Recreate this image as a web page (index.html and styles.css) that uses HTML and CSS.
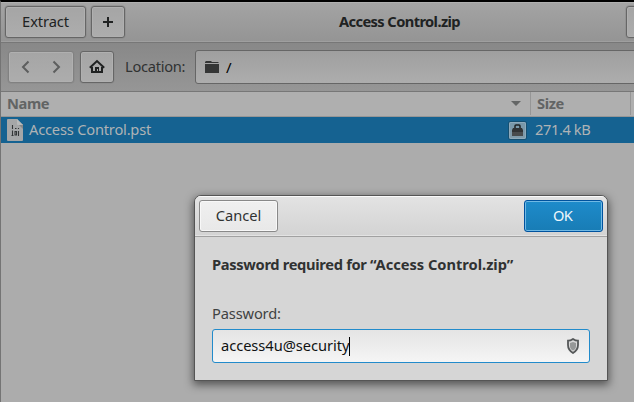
FILE: index.html
```html
<!DOCTYPE html>
<html lang="en">
<head>
<meta charset="utf-8">
<title>Access Control.zip</title>
<link rel="stylesheet" href="styles.css">
</head>
<body>
<main class="window">
  <header class="headerbar">
    <button class="btn extract"><span class="t-extract">Extract</span></button>
    <button class="btn square"><svg width="16" height="16" viewBox="0 0 16 16"><path d="M8 3v10M3 8h10" stroke="#202222" stroke-width="2"/></svg></button>
    <h1 class="title">Access Control.zip</h1>
    <button class="btn edge" aria-label="Menu"></button>
  </header>
  <nav class="toolbar">
    <div class="btn pair">
      <svg width="16" height="16" viewBox="0 0 16 16"><path d="M10.500 2.500L5 8l5.500 5.500" fill="none" stroke="#5d5e5e" stroke-width="2"/></svg>
      <svg width="16" height="16" viewBox="0 0 16 16"><path d="M4.500 2.500L10 8l-5.500 5.500" fill="none" stroke="#5d5e5e" stroke-width="2"/></svg>
    </div>
    <button class="btn square home"><svg width="16" height="16" viewBox="0 0 16 16"><path d="M.8 8.700L8 2l7.200 6.700" fill="none" stroke="#202222" stroke-width="2"/><path d="M3 8v5h10V8" fill="none" stroke="#202222" stroke-width="2"/><path d="M6 8h4v5H6z" fill="#202222"/><path d="M8 10h1v2H8z" fill="#aaa"/></svg></button>
    <span class="location">Location:</span>
    <div class="path"><svg width="16" height="16" viewBox="0 0 16 16"><path d="M1 4V3l1-1h5l1 1h6l1 1zM1 5h14v9H1z" fill="#353636"/></svg><span class="slash">/</span></div>
  </nav>
  <section class="list">
    <div class="row head">
      <div class="cell name">Name<svg class="arrow" width="10" height="5" viewBox="0 0 10 5"><path d="M0 0h10L5 5z" fill="#646666"/></svg></div>
      <div class="cell size">Size</div>
    </div>
    <div class="row file">
      <div class="cell name">
        <svg class="doc" width="16" height="22" viewBox="0 0 16 22"><path d="M0 1q0-1 1-1h9l6 6v15q0 1-1 1H1q-1 0-1-1z" fill="#a5a7a8"/><path d="M11 5h5v5z" fill="#858889"/><path d="M10 0l6 6h-5q-1 0-1-1z" fill="#b8baba"/><path d="M5.500 6v4M8 9.500h1.500M11.500 9v1M5.500 11.500v5M8 12.500h1.500v3.500H8zM11.500 12v5M4.500 16.500h2" fill="none" stroke="#333637" stroke-width="1.100"/></svg>
        <span class="filename">Access Control.pst</span>
        <span class="lock"><svg width="17" height="17" viewBox="0 0 17 17"><path d="M6 7V4q0-1 1-1h3q1 0 1 1v3" fill="none" stroke="#1c2022" stroke-width="1.500"/><path d="M4 6h9l1 2v5q0 1-1 1H4q-1 0-1-1V8z" fill="#303335"/><path d="M3 10h11v3q0 1-1 1H4q-1 0-1-1z" fill="#484b4d"/></svg></span>
      </div>
      <div class="cell size"><span class="lift">271.4 kB</span></div>
    </div>
  </section>
</main>
<div class="dialog" role="dialog">
  <header class="dialog-bar">
    <button class="dbtn"><span class="t-cancel">Cancel</span></button>
    <button class="dbtn ok"><span class="t-ok">OK</span></button>
  </header>
  <div class="dialog-body">
    <h2 class="question">Password required for <span class="archive">“Access Control.zip”</span></h2>
    <div class="label">Password:</div>
    <div class="entry"><span class="value">access4u@security</span><i class="caret"></i>
      <svg class="shield" width="14" height="16" viewBox="0 0 14 16"><path d="M7 1Q9.500 2.700 12 2.700V7q0 5-5 8-5-3-5-8V2.700Q4.500 2.700 7 1z" fill="#d8d8d8" stroke="#555859" stroke-width="1.800"/><path d="M7 4l3 1v3q0 3-3 4.500Q4 11 4 8V5z" fill="#969898"/></svg>
    </div>
  </div>
</div>
</body>
</html>
```
FILE: styles.css
```css
* { box-sizing: border-box; }
body { margin: 0; width: 634px; height: 402px; overflow: hidden; background: #acacac; color: #202222; font: 14.67px/20px "Noto Sans", sans-serif; }
button { font: inherit; color: inherit; padding: 0; }
svg { display: block; flex: none; }
span, h1, h2 { white-space: nowrap; }
.window { height: 402px; border-top: 2px solid #000; border-left: 1px solid #747474; background: #acacac; overflow: hidden; }
.headerbar { position: relative; display: flex; align-items: flex-start; gap: 5px; height: 41px; padding: 4px 0 0 4px; border-bottom: 1px solid #777; background: linear-gradient(#a4a4a4, #949494); box-shadow: inset 0 1px #b0b0b0, inset 0 -1px #9f9f9f; }
.btn { display: flex; align-items: center; justify-content: center; flex: none; height: 32px; border: 1px solid #666; border-radius: 3px; background: linear-gradient(#a5a5a5, #adadad); box-shadow: inset 0 0 0 1px #b0b0b0, 0 0 0 .5px #888; }
.extract { width: 81px; }
.t-extract, .t-cancel, .t-ok, .filename, .lift, .value { padding-bottom: 2px; }
.t-extract { letter-spacing: -.1px; }
.square { width: 34px; }
.edge { width: 20px; margin-left: auto; margin-right: -12px; }
.title { position: absolute; left: 338px; top: 9px; margin: 0; font-size: 14.67px; font-weight: 700; line-height: 20px; letter-spacing: -.6px; }
.toolbar { display: flex; align-items: flex-start; height: 49px; padding: 8px 0 0 7px; border-bottom: 1px solid #777; background: linear-gradient(#888, #969696); }
.pair { width: 66px; gap: 15px; border-color: #818181; }
.home { margin-left: 6px; }
.location { flex: none; margin: 5px 10px 0 11px; width: 60px; color: #303232; letter-spacing: -.28px; }
.path { display: flex; align-items: center; gap: 6px; width: 450px; flex: none; height: 34px; margin-top: -1px; padding-left: 8px; border: 1px solid #666; border-radius: 3px; background: linear-gradient(#9f9f9f, #adadad); color: #000; }
.slash { font-size: 15px; }
.row { display: flex; }
.cell { display: flex; align-items: center; }
.name { width: 530px; flex: none; position: relative; }
.head { height: 25px; border-bottom: 1px solid #969696; background: #afafaf; color: #626464; font-weight: 700; letter-spacing: -.4px; line-height: 19px; padding-bottom: 1px; }
.head .name { padding-left: 6px; border-right: 1px solid #969696; }
.arrow { margin-left: auto; margin-right: 9px; }
.head .size { width: 100px; padding-left: 6px; border-right: 1px solid #969696; }
.file { height: 26px; background: #156291; color: #afb3b5; letter-spacing: -.2px; }
.file .name { padding-left: 6px; }
.file .size { padding-left: 4px; letter-spacing: -.4px; }
.filename { margin-left: 6px; }
.lock { margin-left: auto; margin-right: 5px; width: 17px; height: 17px; border-radius: 2px; background: linear-gradient(#7797a9, #819baa); box-shadow: inset 0 0 0 1px #8eaabb, 0 0 0 1px #154f70; }
.dialog { position: absolute; left: 194px; top: 195px; width: 414px; height: 186px; border: 1px solid #555; border-radius: 7px 7px 0 0; background: #d6d6d6; box-shadow: 0 3px 9px 1px rgba(0,0,0,.5); overflow: hidden; }
.dialog-bar { display: flex; justify-content: space-between; align-items: flex-start; height: 41px; padding: 4px; border-bottom: 1px solid #a1a1a1; background: linear-gradient(#e3e3e3, #d3d3d3); box-shadow: inset 0 1px #fafafa, inset 0 -1px #e3e3e3; }
.dbtn { display: flex; align-items: center; justify-content: center; width: 79px; height: 32px; border: 1px solid #898989; border-radius: 3px; background: linear-gradient(#f0f0f0, #e8e8e8); box-shadow: inset 0 0 0 1px #f8f8f8; color: #303232; }
.ok { border-color: #00529e; background: linear-gradient(#1e8bcb, #187cb5); box-shadow: inset 0 0 0 1px #70b9e5; color: #eef7fc; }
.t-ok { letter-spacing: -.8px; margin-right: 2px; }
.dialog-body { padding: 17px 17px 0; }
.question { margin: 0 0 29px; font-size: 14.67px; line-height: 20px; font-weight: 700; color: #303232; letter-spacing: -.32px; }
.archive { letter-spacing: -.02px; }
.label { height: 26px; color: #404242; letter-spacing: -.15px; }
.entry { display: flex; align-items: center; height: 34px; padding: 0 9px 0 8px; border: 1px solid #228bcb; border-radius: 3px; background: linear-gradient(#e4e4e4, #f5f5f5); color: #101212; }
.value { letter-spacing: -.05px; }
.caret { width: 1px; height: 19px; background: #000; }
.shield { margin-left: auto; }
```
